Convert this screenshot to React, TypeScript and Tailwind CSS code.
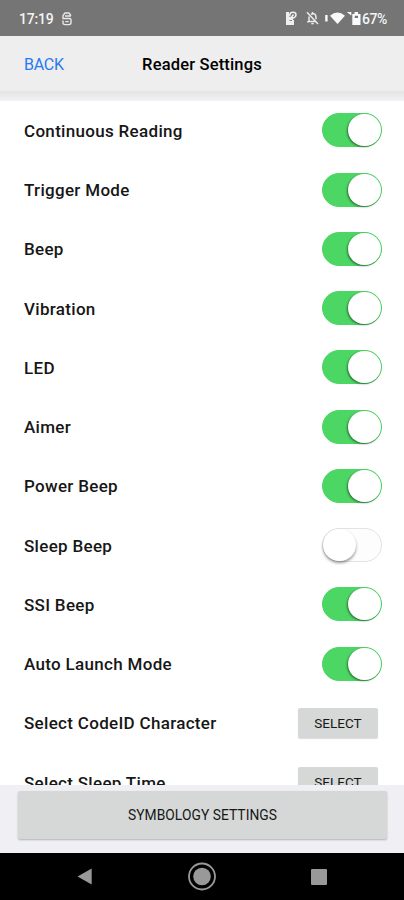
const settings = [
  { label: 'Continuous Reading', on: true },
  { label: 'Trigger Mode', on: true },
  { label: 'Beep', on: true },
  { label: 'Vibration', on: true },
  { label: 'LED', on: true },
  { label: 'Aimer', on: true },
  { label: 'Power Beep', on: true },
  { label: 'Sleep Beep', on: false },
  { label: 'SSI Beep', on: true },
  { label: 'Auto Launch Mode', on: true },
  { label: 'Select CodeID Character' },
  { label: 'Select Sleep Time' },
];

function Toggle({ on }: { on: boolean }) {
  return (
    <button
      role="switch"
      aria-checked={on}
      className={`mb-[0.5px] flex h-[34px] w-[60px] items-center rounded-full border ${
        on ? 'justify-end border-[#4cd663] bg-[#4cd663]' : 'justify-start border-[#e3e3e3] bg-[#fdfdfd]'
      }`}
    >
      <span
        className={`h-8 w-[33px] rounded-full bg-white ${
          on ? 'shadow-[-1px_1px_2px_rgba(0,0,0,0.45)]' : 'shadow-[0_2px_3px_rgba(0,0,0,0.4)]'
        }`}
      />
    </button>
  );
}

function StatusBar() {
  return (
    <div className="flex h-9 shrink-0 items-center bg-[#757575] pr-[17px] pl-[19px] text-[14px] font-medium text-[#f4f4f4]">
      <span className="pt-0.5 tracking-[-0.2px]">17:19</span>
      <svg className="mt-px ml-[8px]" width="10" height="14" viewBox="0 0 10 14" fill="none" stroke="#e8e8e8" strokeWidth="1.4">
        <path d="M9 3.6L7 1H3L1 3.6V6.5H7.4Q9 6.5 9 8V10.5Q9 12.6 7 12.6H3Q1 12.6 1 10.5V8.5M3 4H9M3.3 9.6H6.7" />
      </svg>
      <div className="ml-auto flex items-center">
        <svg width="12" height="15" viewBox="0 0 12 15">
          <path d="M1 1H4V6H8V9H9V14H1Z" fill="#eeeeee" />
          <path d="M4.8 5.5V3.6Q5 1.3 8 1.3Q11 1.3 11 3.8Q11 6.3 7.6 7.3M8.5 3.5L5.5 7.5" fill="none" stroke="#eeeeee" strokeWidth="1.5" />
          <path d="M4.5 9.5H7" fill="none" stroke="#858585" />
        </svg>
        <svg className="ml-[9px]" width="13" height="14" viewBox="0 0 13 14" fill="none" stroke="#ececec" strokeWidth="1.5">
          <path d="M1 1.2L12 13M3 5.5V10.5H9.7M1.2 10.7H3M5 3.2Q10 1.3 10 6.5V8.2M6.5 1V2.4" />
          <path d="M5.3 12.6H7.7" />
        </svg>
        <svg className="ml-[6px]" width="37" height="15" viewBox="0 0 37 15" fill="#fafafa">
          <path d="M.2 4H2.6V10.5H.2ZM5 4.8Q12.5-1.8 20 4.8L12.5 13Z" />
          <path d="M21.8 1H26.3V4.5Z" />
          <path fillRule="evenodd" d="M27.3 3H29.5V1H33V3H35.5V14H27.3ZM29.8 4.8V7H33V4.8Z" />
        </svg>
        <span className="pt-0.5 tracking-[-0.4px]">67%</span>
      </div>
    </div>
  );
}

export default function App() {
  return (
    <main className="flex h-[900px] w-[404px] flex-col overflow-hidden bg-white font-[Roboto,sans-serif] text-[#171717]">
      <StatusBar />
      <header className="grid h-14 shrink-0 grid-cols-[1fr_auto_1fr] items-center border-b border-[#e4e4e4] bg-[#eeeeee] px-6 pt-0.5">
        <button className="justify-self-start text-[16px] tracking-[-0.25px] text-[#2879f4]">BACK</button>
        <h1 className="pt-0.5 text-[16.5px] font-medium tracking-[0.17px] text-black">Reader Settings</h1>
      </header>
      <div className="h-[9px] shrink-0 bg-linear-to-b from-[#e5e5e7] to-[#f2f2f6]" />
      <div className="min-h-0 flex-1 overflow-hidden">
        {settings.map(({ label, on }) => (
          <div key={label} className="flex h-[59.25px] items-center justify-between pr-[22px] pl-6">
            <span className="pt-[2px] text-[17px] font-medium tracking-[0.31px]">{label}</span>
            {on === undefined ? (
              <button className="mr-1 h-[30px] w-[80px] rounded-xs bg-[#d6d7d7] text-[13.5px] tracking-[0.02px] shadow-[0_1px_1px_rgba(0,0,0,0.14)]">
                SELECT
              </button>
            ) : (
              <Toggle on={on} />
            )}
          </div>
        ))}
      </div>
      <footer className="h-[68px] shrink-0 bg-[#efeff4] pt-[6px] pr-[17px] pl-[18px]">
        <button className="h-[48px] w-full rounded-xs bg-[#d6d7d7] text-[13.8px] tracking-[0.05px] shadow-[0_1px_2px_rgba(0,0,0,0.25)]">
          SYMBOLOGY SETTINGS
        </button>
      </footer>
      <nav className="flex h-[47px] shrink-0 items-center justify-between bg-black pr-[77px] pl-[77px]">
        <svg width="15" height="17" viewBox="0 0 15 17" fill="#999999"><path d="M0.5 8.5L14.7 0.5V16.5Z" /></svg>
        <svg width="29" height="29" viewBox="0 0 29 29">
          <circle cx="15" cy="14.5" r="13" fill="none" stroke="#999999" strokeWidth="1.8" />
          <circle cx="15" cy="14.5" r="8.8" fill="#999999" />
        </svg>
        <span className="size-4 rounded-[1px] bg-[#999999]" />
      </nav>
    </main>
  );
}
